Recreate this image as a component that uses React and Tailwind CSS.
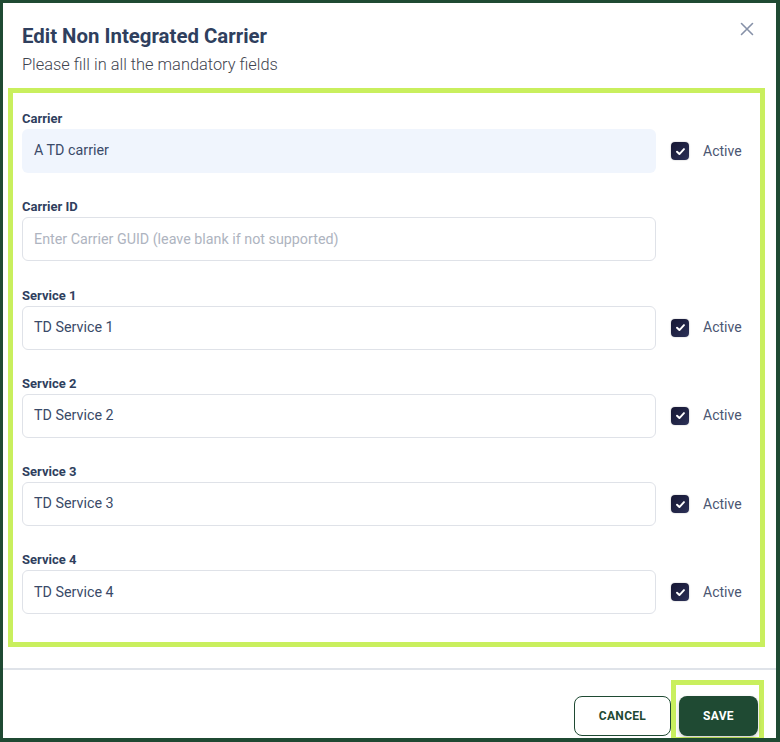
import React from "react";

function Check() {
  return (
    <div className="flex h-[18px] w-[18px] shrink-0 items-center justify-center rounded-[4px] bg-gradient-to-br from-[#151632] to-[#2c3158] shadow-[0_0_1px_1px_rgba(0,0,0,0.08)]">
      <svg width="11" height="11" viewBox="0 0 12 12" fill="none">
        <path d="M2.2 6.3 L4.8 8.8 L9.8 3.4" stroke="white" strokeWidth="2.1" strokeLinecap="round" strokeLinejoin="round" />
      </svg>
    </div>
  );
}

function Field({ label, value, placeholder, disabled, active }) {
  return (
    <div className="flex flex-col">
      <div className="mb-[2px] h-[16px] text-[13px] leading-[16px] font-bold text-[#2f3f5e]">{label}</div>
      <div className="flex items-center">
        <div
          className={
            disabled
              ? "flex h-[44px] w-[634px] items-center rounded-[6px] bg-[#f0f5fd] px-[12px] text-[14.3px] text-[#3a4a68]"
              : "flex h-[44px] w-[634px] items-center rounded-[6px] border border-[#dfe2e8] bg-white px-[11px] text-[14.3px] text-[#3a4a68]"
          }
        >
          {value ? <span>{value}</span> : <span className="text-[#aeb4c0]">{placeholder}</span>}
        </div>
        {active && (
          <div className="ml-[15px] flex items-center">
            <Check />
            <span className="ml-[14px] text-[14px] text-[#4b5672]">Active</span>
          </div>
        )}
      </div>
    </div>
  );
}

export default function App() {
  return (
    <div
      className="relative flex h-[742px] w-[780px] flex-col overflow-hidden border-t-[3px] border-l-[3px] border-r-4 border-b-4 border-[#1f4a33] bg-white"
      style={{ fontFamily: "Roboto, 'Liberation Sans', sans-serif" }}
    >
      <div className="relative px-[19px] pt-[20px]">
        <h1 className="text-[20.4px] leading-[26px] font-bold text-[#2f3f5e]">Edit Non Integrated Carrier</h1>
        <p className="mt-[5px] text-[16.4px] leading-[22px] font-light text-[#3f4550]">Please fill in all the mandatory fields</p>
        <button className="absolute top-[17px] right-[20px] text-[#8691a8]">
          <svg width="18" height="18" viewBox="0 0 18 18" fill="none">
            <path d="M3.5 3.5 L14.5 14.5 M14.5 3.5 L3.5 14.5" stroke="currentColor" strokeWidth="1.6" strokeLinecap="round" />
          </svg>
        </button>
      </div>

      <div className="mt-[12px] ml-[5px] w-[757px] border-[5px] border-[#c9ef5e] pt-[18px] pr-[18px] pb-[28px] pl-[9px]">
        <div className="flex flex-col gap-[26.3px]">
          <Field label="Carrier" value="A TD carrier" disabled active />
          <Field label="Carrier ID" placeholder="Enter Carrier GUID (leave blank if not supported)" />
          <Field label="Service 1" value="TD Service 1" active />
          <Field label="Service 2" value="TD Service 2" active />
          <Field label="Service 3" value="TD Service 3" active />
          <Field label="Service 4" value="TD Service 4" active />
        </div>
      </div>

      <div className="mt-[21px] h-[2px] w-full bg-[#dfe3e9]" />

      <div className="flex justify-end gap-[8px] pt-[26px] pr-[18px]">
        <button className="h-[40px] w-[97px] rounded-[8px] border border-[#1f4a33] bg-white text-[12px] font-bold tracking-[0.3px] text-[#1f4a33]">
          CANCEL
        </button>
        <div className="relative">
          <div className="pointer-events-none absolute -top-[16px] -left-[8px] -right-[6px] -bottom-[6px] border-[5px] border-[#c9ef5e]" />
          <button className="relative h-[40px] w-[79px] rounded-[8px] bg-[#1f4a33] text-[12px] font-bold tracking-[0.3px] text-white shadow-[0_2px_4px_rgba(0,0,0,0.2)]">
            SAVE
          </button>
        </div>
      </div>
    </div>
  );
}
